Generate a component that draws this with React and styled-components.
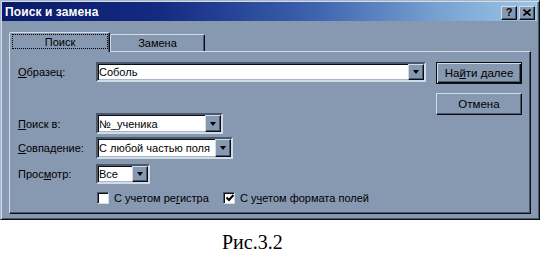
import React from "react";
import styled, { createGlobalStyle } from "styled-components";

const c = {
  face: "#8798b1",
  hi: "#d2dbe8",
  light: "#a9b6c9",
  shadow: "#4c596d",
  dark: "#0a0d14",
};

const GlobalStyle = createGlobalStyle`
  html, body { margin: 0; padding: 0; background: #fff; }
  body {
    width: 541px;
    height: 255px;
    overflow: hidden;
    font-family: "Liberation Sans", Arial, sans-serif;
    font-size: 11px;
    color: #000;
  }
`;

const Page = styled.div`
  width: 541px;
  height: 255px;
  display: flex;
  flex-direction: column;
`;

const Dialog = styled.div`
  box-sizing: border-box;
  width: 540px;
  height: 220px;
  flex: none;
  background: ${c.face};
  border: 1px solid;
  border-color: ${c.light} ${c.dark} ${c.dark} ${c.light};
  box-shadow: inset 1px 1px 0 ${c.hi}, inset -1px -1px 0 ${c.shadow};
  padding: 1px 2px 0 1px;
  display: flex;
  flex-direction: column;
`;

const TitleBar = styled.div`
  height: 19px;
  flex: none;
  display: flex;
  align-items: center;
  justify-content: space-between;
  padding: 0 2px 0 3px;
  background: linear-gradient(90deg, #0a1a68 0%, #142b82 30%, #3d62ae 58%, #78a3d2 82%, #9cc6e6 100%);
`;

const Title = styled.div`
  color: #fff;
  font-weight: bold;
  font-size: 12px;
  letter-spacing: 0.1px;
`;

const TitleButtons = styled.div`
  display: flex;
  gap: 2px;
  margin-top: 2px;
`;

const TitleBtn = styled.div`
  box-sizing: border-box;
  width: 16px;
  height: 14px;
  background: ${c.face};
  border: 1px solid;
  border-color: ${c.hi} ${c.dark} ${c.dark} ${c.hi};
  box-shadow: inset -1px -1px 0 ${c.shadow};
  display: flex;
  align-items: center;
  justify-content: center;
  font-weight: bold;
  font-size: 11px;
  line-height: 1;
`;

const Body = styled.div`
  flex: 1;
  padding: 11px 6px 0 7px;
  display: flex;
  flex-direction: column;
`;

const Tabs = styled.div`
  height: 19px;
  display: flex;
  align-items: flex-end;
`;

const Tab = styled.div`
  box-sizing: border-box;
  position: relative;
  z-index: ${(p) => (p.$active ? 1 : 0)};
  width: ${(p) => (p.$active ? 101 : 95)}px;
  height: ${(p) => (p.$active ? 20 : 17)}px;
  margin-bottom: ${(p) => (p.$active ? -1 : 0)}px;
  background: ${c.face};
  border: 1px solid;
  border-bottom: none;
  border-color: ${c.hi} ${c.dark} transparent ${c.hi};
  border-radius: 2px 2px 0 0;
  box-shadow: inset -1px 0 0 ${c.shadow};
  display: flex;
  justify-content: center;
  align-items: ${(p) => (p.$active ? "flex-start" : "center")};
  padding: ${(p) => (p.$active ? "1px 1px 0 2px" : "0")};
`;

const Focus = styled.div`
  box-sizing: border-box;
  width: 100%;
  height: 15px;
  border: 1px dotted #000;
  display: flex;
  align-items: center;
  justify-content: center;
`;

const Panel = styled.div`
  box-sizing: border-box;
  height: 163px;
  border: 1px solid;
  border-color: ${c.hi} ${c.dark} ${c.dark} ${c.hi};
  box-shadow: inset -1px -1px 0 ${c.shadow};
  display: grid;
  grid-template-columns: 1fr 86px;
  column-gap: 10px;
  padding: 10px 8px 0 8px;
`;

const Form = styled.div`
  display: flex;
  flex-direction: column;
`;

const Row = styled.div`
  display: flex;
  align-items: center;
  height: ${(p) => p.$h}px;
  margin-top: ${(p) => p.$mt || 0}px;
`;

const Label = styled.div`
  width: 78px;
  flex: none;
`;

const Key = styled.span`
  text-decoration: underline;
  text-underline-offset: 1px;
`;

const Field = styled.div`
  box-sizing: border-box;
  height: 100%;
  width: ${(p) => (p.$w ? `${p.$w}px` : "auto")};
  flex: ${(p) => (p.$w ? "none" : 1)};
  background: #fff;
  border: 2px solid;
  border-color: ${c.shadow} ${c.hi} ${c.hi} ${c.shadow};
  box-shadow: inset 1px 1px 0 ${c.dark}, inset -1px -1px 0 ${c.light};
  display: flex;
  align-items: center;
  padding: 0 0 0 1px;
  white-space: nowrap;
  overflow: hidden;
`;

const FieldText = styled.div`
  flex: 1;
  overflow: hidden;
  font-size: 11px;
`;

const DropBtn = styled.div`
  box-sizing: border-box;
  width: 16px;
  height: 100%;
  flex: none;
  background: ${c.face};
  border: 1px solid;
  border-color: ${c.hi} ${c.dark} ${c.dark} ${c.hi};
  box-shadow: inset -1px -1px 0 ${c.shadow};
  display: flex;
  align-items: center;
  justify-content: center;
  &::after {
    content: "";
    border-left: 3.5px solid transparent;
    border-right: 3.5px solid transparent;
    border-top: 4px solid #000;
  }
`;

const CheckRow = styled.div`
  display: flex;
  align-items: center;
  height: 13px;
  margin-top: 7px;
  padding-left: 79px;
`;

const CheckItem = styled.div`
  display: flex;
  align-items: center;
  gap: 5px;
  width: ${(p) => (p.$w ? `${p.$w}px` : "auto")};
`;

const Box = styled.div`
  box-sizing: border-box;
  width: 12px;
  height: 12px;
  background: #fff;
  border: 1px solid;
  border-color: ${c.shadow} ${c.hi} ${c.hi} ${c.shadow};
  box-shadow: inset 1px 1px 0 ${c.dark};
  display: flex;
  align-items: center;
  justify-content: center;
  padding: 1px 0 0 1px;
`;

const Side = styled.div`
  display: flex;
  flex-direction: column;
  gap: 9px;
`;

const PushButton = styled.div`
  box-sizing: border-box;
  height: 22px;
  background: ${c.face};
  border: 1px solid;
  border-color: ${(p) => (p.$default ? `${c.dark}` : `${c.hi} ${c.dark} ${c.dark} ${c.hi}`)};
  box-shadow: ${(p) =>
    p.$default
      ? `inset 1px 1px 0 ${c.hi}, inset -1px -1px 0 ${c.dark}, inset -2px -2px 0 ${c.shadow}`
      : `inset -1px -1px 0 ${c.shadow}`};
  display: flex;
  align-items: center;
  justify-content: center;
  font-size: 11.5px;
`;

const Caption = styled.div`
  padding: 12px 0 0 222px;
  font-family: "Liberation Serif", "DejaVu Serif", "Times New Roman", serif;
  font-size: 20px;
  line-height: 20px;
  color: #000;
`;

const Check = () => (
  <svg width="8" height="8" viewBox="0 0 8 8">
    <path d="M0.5 3.5 L3 6 L7.5 1" fill="none" stroke="#000" strokeWidth="2" />
  </svg>
);

const CloseX = () => (
  <svg width="8" height="7" viewBox="0 0 8 7">
    <path d="M0.5 0.5 L7.5 6.5 M7.5 0.5 L0.5 6.5" stroke="#000" strokeWidth="1.6" />
  </svg>
);

function App() {
  return (
    <Page>
      <GlobalStyle />
      <Dialog>
        <TitleBar>
          <Title>Поиск и замена</Title>
          <TitleButtons>
            <TitleBtn>?</TitleBtn>
            <TitleBtn><CloseX /></TitleBtn>
          </TitleButtons>
        </TitleBar>
        <Body>
          <Tabs>
            <Tab $active><Focus>Поиск</Focus></Tab>
            <Tab>Замена</Tab>
          </Tabs>
          <Panel>
            <Form>
              <Row $h={20}>
                <Label><Key>О</Key>бразец:</Label>
                <Field>
                  <FieldText>Соболь</FieldText>
                  <DropBtn />
                </Field>
              </Row>
              <Row $h={21} $mt={31}>
                <Label><Key>П</Key>оиск в:</Label>
                <Field $w={127}>
                  <FieldText>№_ученика</FieldText>
                  <DropBtn />
                </Field>
              </Row>
              <Row $h={22} $mt={3}>
                <Label><Key>С</Key>овпадение:</Label>
                <Field $w={137}>
                  <FieldText>С любой частью поля</FieldText>
                  <DropBtn />
                </Field>
              </Row>
              <Row $h={20} $mt={5}>
                <Label>Прос<Key>м</Key>отр:</Label>
                <Field $w={54}>
                  <FieldText>Все</FieldText>
                  <DropBtn />
                </Field>
              </Row>
              <CheckRow>
                <CheckItem $w={126}>
                  <Box />
                  <span>С учетом ре<Key>г</Key>истра</span>
                </CheckItem>
                <CheckItem>
                  <Box><Check /></Box>
                  <span>С у<Key>ч</Key>етом формата полей</span>
                </CheckItem>
              </CheckRow>
            </Form>
            <Side>
              <PushButton $default>На<Key>й</Key>ти далее</PushButton>
              <PushButton>Отмена</PushButton>
            </Side>
          </Panel>
        </Body>
      </Dialog>
      <Caption>Рис.3.2</Caption>
    </Page>
  );
}

export default App;
